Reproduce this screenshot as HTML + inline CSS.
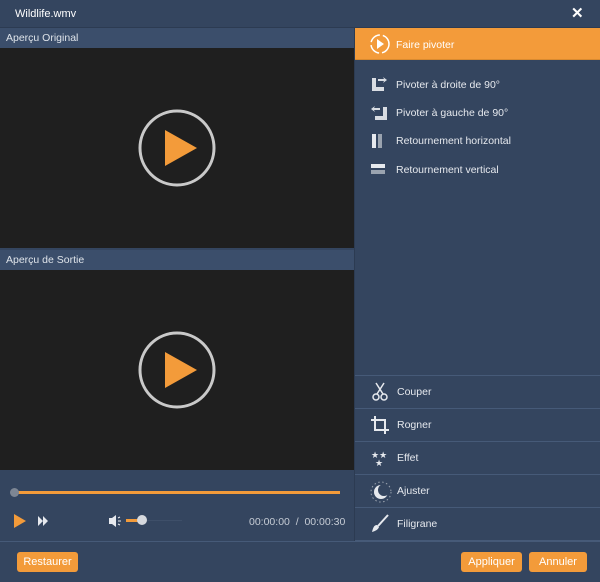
<!DOCTYPE html><html><head><meta charset="utf-8"><style>
*{margin:0;padding:0;box-sizing:border-box}
body{width:600px;height:582px;background:#34455f;font-family:"Liberation Sans",sans-serif;position:relative;overflow:hidden;color:#e6e9ee;font-size:11px}
.a{position:absolute}
.hdr{background:#3b4e6b;color:#dfe4ea;font-size:10.5px;padding:4px 6px;height:20px}
.vid{background:#1f1f1f}
.btn{background:#f39b3a;color:#fff;border-radius:3px;font-size:11px;display:flex;align-items:center;justify-content:center;height:20px}
.it{left:396px;font-size:10.5px;color:#e6e9ee}
.row{left:355px;width:245px;height:33px;border-top:1px solid #465a78}
.row span{position:absolute;left:42px;top:10px;font-size:10.5px}
.row svg{position:absolute;left:15px;top:6px}
</style></head><body>
<div class="a" style="left:15px;top:8px;font-size:11px;color:#fff">Wildlife.wmv</div>
<div class="a" style="left:571px;top:4px;font-size:15px;color:#fff;font-weight:bold">✕</div>
<div class="a" style="left:0;top:27px;width:600px;height:1px;background:#2c3b52"></div>
<div class="a hdr" style="left:0;top:28px;width:354px">Aperçu Original</div>
<div class="a vid" style="left:0;top:48px;width:354px;height:200px"></div>
<div class="a hdr" style="left:0;top:250px;width:354px">Aperçu de Sortie</div>
<div class="a vid" style="left:0;top:270px;width:354px;height:200px"></div>
<svg class="a" style="left:137px;top:108px" width="80" height="80"><circle cx="40" cy="40" r="37" fill="none" stroke="#c9c9c9" stroke-width="3"/><path d="M28 22 L60 40 L28 58Z" fill="#f39b3a"/></svg>
<svg class="a" style="left:137px;top:330px" width="80" height="80"><circle cx="40" cy="40" r="37" fill="none" stroke="#c9c9c9" stroke-width="3"/><path d="M28 22 L60 40 L28 58Z" fill="#f39b3a"/></svg>
<div class="a" style="left:354px;top:28px;width:1px;height:514px;background:#2c3b52"></div>
<div class="a" style="left:355px;top:28px;width:245px;height:32px;background:#f39b3a;border-bottom:1px solid #d98a30"></div>
<svg class="a" style="left:368px;top:33px" width="24" height="22"><circle cx="12" cy="11" r="9" fill="none" stroke="#fff" stroke-width="1.5" stroke-dasharray="12 3"/><path d="M9 6 L16 11 L9 16Z" fill="#fff"/></svg>
<div class="a" style="left:396px;top:39px;font-size:10.5px;color:#fff">Faire pivoter</div>
<svg class="a" style="left:371px;top:76px" width="18" height="16"><path d="M1 2h4v9h8v4H1z" fill="#d9dde3"/><path d="M7 3h6l-1-2 4 3-4 3 1-2H7z" fill="#d9dde3"/></svg>
<div class="a it" style="top:79px">Pivoter à droite de 90°</div>
<svg class="a" style="left:370px;top:105px" width="18" height="16"><path d="M13 2h4v13H5v-4h8z" fill="#d9dde3"/><path d="M10 3H4l1-2-4 3 4 3-1-2h6z" fill="#d9dde3"/></svg>
<div class="a it" style="top:107px">Pivoter à gauche de 90°</div>
<div class="a" style="left:372px;top:134px;width:4px;height:14px;background:#e6e9ee"></div><div class="a" style="left:378px;top:134px;width:4px;height:14px;background:#9aa3af"></div>
<div class="a it" style="top:135px">Retournement horizontal</div>
<div class="a" style="left:371px;top:164px;width:14px;height:4px;background:#e6e9ee"></div><div class="a" style="left:371px;top:170px;width:14px;height:4px;background:#9aa3af"></div>
<div class="a it" style="top:164px">Retournement vertical</div>
<div class="a row" style="top:375px"><svg width="20" height="20"><circle cx="6" cy="15" r="3" fill="none" stroke="#e6e9ee" stroke-width="1.5"/><circle cx="14" cy="15" r="3" fill="none" stroke="#e6e9ee" stroke-width="1.5"/><path d="M7 12L14 1M13 12L6 1" stroke="#e6e9ee" stroke-width="1.5"/></svg><span>Couper</span></div>
<div class="a row" style="top:408px"><svg width="20" height="20"><path d="M5 1v14h14M1 5h14v14" fill="none" stroke="#e6e9ee" stroke-width="2"/></svg><span>Rogner</span></div>
<div class="a row" style="top:441px"><svg width="20" height="20"><text x="1" y="10" font-size="9" fill="#e6e9ee">★★</text><text x="5" y="18" font-size="9" fill="#e6e9ee">★</text></svg><span>Effet</span></div>
<div class="a row" style="top:474px"><svg width="22" height="22"><circle cx="11" cy="11" r="7" fill="#e6e9ee"/><circle cx="14" cy="9" r="6" fill="#34455f"/><circle cx="11" cy="11" r="10" fill="none" stroke="#9aa3af" stroke-dasharray="1.5 2.5"/></svg><span>Ajuster</span></div>
<div class="a row" style="top:507px;border-bottom:1px solid #465a78;height:34px"><svg width="20" height="20"><path d="M18 1L8 12" stroke="#e6e9ee" stroke-width="2"/><path d="M7 11c-3 0-4 3-5 7 3-1 6-2 7-5z" fill="#e6e9ee"/></svg><span>Filigrane</span></div>
<div class="a" style="left:14px;top:491px;width:326px;height:3px;background:#f39b3a"></div>
<div class="a" style="left:10px;top:488px;width:9px;height:9px;border-radius:50%;background:#7d8694"></div>
<svg class="a" style="left:14px;top:514px" width="12" height="14"><path d="M0 0L12 7L0 14Z" fill="#f39b3a"/></svg>
<svg class="a" style="left:38px;top:516px" width="10" height="10"><path d="M0 0L5 5L0 10ZM5 0L10 5L5 10Z" fill="#e6e9ee"/></svg>
<svg class="a" style="left:108px;top:514px" width="14" height="14"><path d="M1 4h3l4-3v12l-4-3H1z" fill="#e6e9ee"/><path d="M10 4l2-1M10 7h3M10 10l2 1" stroke="#e6e9ee"/></svg>
<div class="a" style="left:126px;top:520px;width:56px;height:1px;background:#3e4f69"></div>
<div class="a" style="left:126px;top:519px;width:16px;height:3px;background:#f39b3a"></div>
<div class="a" style="left:137px;top:515px;width:10px;height:10px;border-radius:50%;background:#d6d9de"></div>
<div class="a" style="left:249px;top:516px;font-size:10.5px;color:#c6ccd5">00:00:00 &nbsp;/ &nbsp;00:00:30</div>
<div class="a" style="left:0;top:541px;width:600px;height:1px;background:#465a78"></div>
<div class="a btn" style="left:17px;top:552px;width:61px">Restaurer</div>
<div class="a btn" style="left:461px;top:552px;width:61px">Appliquer</div>
<div class="a btn" style="left:529px;top:552px;width:58px">Annuler</div>
</body></html>
